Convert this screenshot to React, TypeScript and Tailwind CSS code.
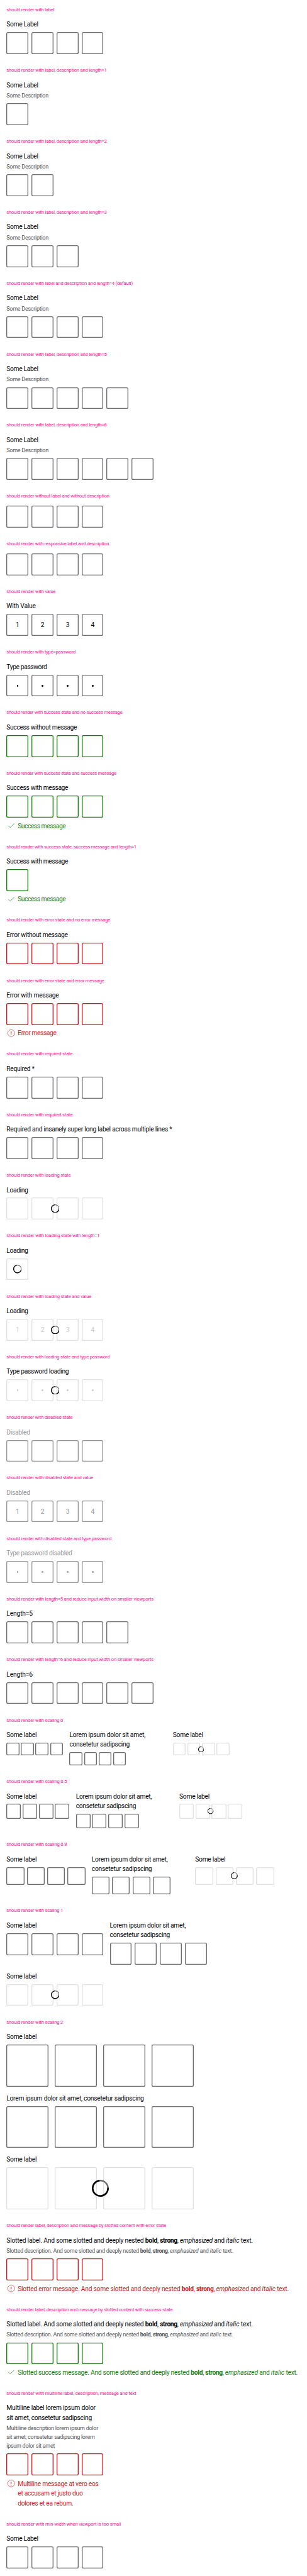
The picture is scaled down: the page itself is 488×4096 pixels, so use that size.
import React from 'react';

type State = 'none' | 'success' | 'error' | 'loading' | 'disabled';

const borderColor: Record<State, string> = {
  none: 'shadow-[inset_0_0_0_2.1px_#6b6d70]',
  success: 'shadow-[inset_0_0_0_2.1px_#197e10]',
  error: 'shadow-[inset_0_0_0_2.1px_#cc1922]',
  loading: 'shadow-[inset_0_0_0_2.1px_#e1e1e2]',
  disabled: 'shadow-[inset_0_0_0_2.1px_#949598]',
};

const valueColor: Record<State, string> = {
  none: 'text-[#010205]',
  success: 'text-[#010205]',
  error: 'text-[#010205]',
  loading: 'text-[#cbcbcc]',
  disabled: 'text-[#949598]',
};

type Scale = 's0' | 's05' | 's08' | 's1' | 's2';

const boxSize: Record<Scale, string> = {
  s0: 'size-8',
  s05: 'size-9',
  s08: 'size-11',
  s1: 'size-[54px]',
  s2: 'size-[104px]',
};

const gapSize: Record<Scale, string> = {
  s0: 'gap-1',
  s05: 'gap-1',
  s08: 'gap-[6.4px]',
  s1: 'gap-2',
  s2: 'gap-4',
};

const spinnerSize: Record<Scale, string> = {
  s0: 'size-[14.5px]',
  s05: 'size-[14.5px]',
  s08: 'size-[17px]',
  s1: 'size-[21px]',
  s2: 'size-[42px]',
};

function Spinner({ scale }: { scale: Scale }) {
  return (
    <div className="absolute inset-0 flex items-center justify-center">
      <svg viewBox="0 0 42 42" fill="none" strokeWidth="3.8" className={spinnerSize[scale]}>
        <circle cx="21" cy="21" r="19" stroke="#6b6d70" />
        <path d="M40 21A19 19 0 1 1 17.4 2.35" stroke="#010205" strokeLinecap="round" />
      </svg>
    </div>
  );
}

function Boxes({
  length = 4,
  state = 'none',
  scale = 's1',
  value,
}: {
  length?: number;
  state?: State;
  scale?: Scale;
  value?: 'digits' | 'password';
}) {
  return (
    <div className={`relative flex w-fit ${gapSize[scale]}`}>
      {Array.from({ length }, (_, i) => (
        <div
          key={i}
          className={`flex shrink-0 items-center justify-center rounded-[4px] ${boxSize[scale]} ${borderColor[state]} ${valueColor[state]}`}
        >
          {value === 'digits' && <span className="pt-px pl-px">{i + 1}</span>}
          {value === 'password' && <span className="mt-px ml-px size-[4.4px] rounded-full bg-current" />}
        </div>
      ))}
      {state === 'loading' && <Spinner scale={scale} />}
    </div>
  );
}

function Label({ children, t, dim }: { children: React.ReactNode; t?: string; dim?: boolean }) {
  return (
    <div
      className={`-mb-px pt-px whitespace-nowrap ${dim ? 'text-[#949598]' : 'text-[#010205]'} ${t ?? 'tracking-[-0.42px]'}`}
    >
      {children}
    </div>
  );
}

function Description({ children }: { children: React.ReactNode }) {
  return (
    <div className="mt-1 text-[14px] leading-[21.83px] tracking-[-0.41px] whitespace-nowrap text-[#535457]">
      {children}
    </div>
  );
}

function Message({ state, t, children }: { state: 'success' | 'error'; t?: string; children: React.ReactNode }) {
  return (
    <div className={`mt-2 flex gap-1 whitespace-nowrap ${state === 'error' ? 'text-[#cc1922]' : 'text-[#197e10]'}`}>
      <svg viewBox="0 0 24 24" fill="none" stroke="currentColor" className="size-6 shrink-0">
        {state === 'error' ? (
          <>
            <circle cx="12" cy="12" r="8.5" />
            <path d="M12 7.7V13.7M12 15.2V17.1" strokeWidth="1.8" />
          </>
        ) : (
          <path d="M5 12.3L9.4 16.7L20 7.3" strokeWidth="1.1" />
        )}
      </svg>
      <div className={`-mb-px pt-px ${t ?? 'tracking-[-0.42px]'}`}>{children}</div>
    </div>
  );
}

function Case({ title, t, children }: { title: string; t?: string; children: React.ReactNode }) {
  return (
    <section className="mb-8">
      <h2
        className={`mb-4 h-4 pt-px text-[12px] leading-4 whitespace-nowrap text-[#ff1493] ${t ?? 'tracking-[-0.34px]'}`}
      >
        {title}
      </h2>
      {children}
    </section>
  );
}

function Pin({
  label,
  t,
  desc,
  message,
  length,
  state = 'none',
  scale,
  value,
}: {
  label?: React.ReactNode;
  t?: string;
  desc?: React.ReactNode;
  message?: React.ReactNode;
  length?: number;
  state?: State;
  scale?: Scale;
  value?: 'digits' | 'password';
}) {
  return (
    <div>
      {label && (
        <Label t={t} dim={state === 'disabled'}>
          {label}
        </Label>
      )}
      {desc && <Description>{desc}</Description>}
      <div className={label ? 'mt-2' : ''}>
        <Boxes length={length} state={state} scale={scale} value={value} />
      </div>
      {message}
    </div>
  );
}

function Nested() {
  return (
    <>
      <b className="font-bold">bold</b>, <strong className="font-bold tracking-[-0.6px]">strong</strong>,{' '}
      <em className="tracking-[-0.27px] italic">emphasized</em> and{' '}
      <i className="tracking-[0.05px] italic">italic</i> text.
    </>
  );
}

function ScaledRow({ scale }: { scale: Scale }) {
  return (
    <div className="flex flex-wrap gap-4">
      <Pin label="Some label" t="tracking-[-0.44px]" scale={scale} />
      <div className={scale === 's2' ? '' : 'w-60'}>
        <Pin
          t="tracking-[-0.41px]"
          label={
            scale === 's2' ? (
              'Lorem ipsum dolor sit amet, consetetur sadipscing'
            ) : (
              <>
                Lorem ipsum dolor sit amet,
                <br />
                consetetur sadipscing
              </>
            )
          }
          scale={scale}
        />
      </div>
      <Pin label="Some label" t="tracking-[-0.44px]" scale={scale} state="loading" />
    </div>
  );
}

export default function App() {
  return (
    <main className="h-[6378px] w-[760px] overflow-hidden bg-white p-4 font-[Roboto,'Liberation_Sans',sans-serif] text-[16px] leading-6 text-[#010205] [zoom:0.6422]">
      <Case title="should render with label">
        <Pin label="Some Label" t="tracking-[-0.54px]" />
      </Case>
      <Case title="should render with label, description and length=1" t="tracking-[-0.31px]">
        <Pin label="Some Label" t="tracking-[-0.54px]" desc="Some Description" length={1} />
      </Case>
      <Case title="should render with label, description and length=2" t="tracking-[-0.31px]">
        <Pin label="Some Label" t="tracking-[-0.54px]" desc="Some Description" length={2} />
      </Case>
      <Case title="should render with label, description and length=3" t="tracking-[-0.31px]">
        <Pin label="Some Label" t="tracking-[-0.54px]" desc="Some Description" length={3} />
      </Case>
      <Case title="should render with label and description and length=4 (default)" t="tracking-[-0.32px]">
        <Pin label="Some Label" t="tracking-[-0.54px]" desc="Some Description" />
      </Case>
      <Case title="should render with label, description and length=5" t="tracking-[-0.31px]">
        <Pin label="Some Label" t="tracking-[-0.54px]" desc="Some Description" length={5} />
      </Case>
      <Case title="should render with label, description and length=6" t="tracking-[-0.31px]">
        <Pin label="Some Label" t="tracking-[-0.54px]" desc="Some Description" length={6} />
      </Case>
      <Case title="should render without label and without description">
        <Pin />
      </Case>
      <Case title="should render with responsive label and description" t="tracking-[-0.37px]">
        <Pin />
      </Case>
      <Case title="should render with value" t="tracking-[-0.32px]">
        <Pin label="With Value" t="tracking-[-0.33px]" value="digits" />
      </Case>
      <Case title="should render with type=password" t="tracking-[-0.36px]">
        <Pin label="Type password" t="tracking-[-0.58px]" value="password" />
      </Case>
      <Case title="should render with success state and no success message" t="tracking-[-0.48px]">
        <Pin label="Success without message" t="tracking-[-0.52px]" state="success" />
      </Case>
      <Case title="should render with success state and success message" t="tracking-[-0.48px]">
        <Pin
          label="Success with message"
          t="tracking-[-0.53px]"
          state="success"
          message={
            <Message state="success" t="tracking-[-0.72px]">
              Success message
            </Message>
          }
        />
      </Case>
      <Case title="should render with success state, success message and length=1" t="tracking-[-0.43px]">
        <Pin
          label="Success with message"
          t="tracking-[-0.53px]"
          state="success"
          length={1}
          message={
            <Message state="success" t="tracking-[-0.72px]">
              Success message
            </Message>
          }
        />
      </Case>
      <Case title="should render with error state and no error message" t="tracking-[-0.37px]">
        <Pin label="Error without message" state="error" />
      </Case>
      <Case title="should render with error state and error message" t="tracking-[-0.36px]">
        <Pin
          label="Error with message"
          t="tracking-[-0.44px]"
          state="error"
          message={
            <Message state="error" t="tracking-[-0.62px]">
              Error message
            </Message>
          }
        />
      </Case>
      <Case title="should render with required state">
        <Pin label="Required *" t="tracking-[-0.46px]" />
      </Case>
      <Case title="should render with required state">
        <Pin label="Required and insanely super long label across multiple lines *" t="tracking-[-0.38px]" />
      </Case>
      <Case title="should render with loading state" t="tracking-[-0.36px]">
        <Pin label="Loading" t="tracking-[-0.55px]" state="loading" />
      </Case>
      <Case title="should render with loading state with length=1" t="tracking-[-0.31px]">
        <Pin label="Loading" t="tracking-[-0.55px]" state="loading" length={1} />
      </Case>
      <Case title="should render with loading state and value">
        <Pin label="Loading" t="tracking-[-0.55px]" state="loading" value="digits" />
      </Case>
      <Case title="should render with loading state and type password" t="tracking-[-0.37px]">
        <Pin label="Type password loading" t="tracking-[-0.46px]" state="loading" value="password" />
      </Case>
      <Case title="should render with disabled state" t="tracking-[-0.38px]">
        <Pin label="Disabled" state="disabled" />
      </Case>
      <Case title="should render with disabled state and value" t="tracking-[-0.36px]">
        <Pin label="Disabled" state="disabled" value="digits" />
      </Case>
      <Case title="should render with disabled state and type password" t="tracking-[-0.39px]">
        <Pin label="Type password disabled" state="disabled" value="password" />
      </Case>
      <Case
        title="should render with length=5 and reduce input width on smaller viewports"
        t="tracking-[-0.30px]"
      >
        <Pin label="Length=5" t="tracking-[-0.21px]" length={5} />
      </Case>
      <Case
        title="should render with length=6 and reduce input width on smaller viewports"
        t="tracking-[-0.30px]"
      >
        <Pin label="Length=6" t="tracking-[-0.21px]" length={6} />
      </Case>
      <Case title="should render with scaling 0" t="tracking-[-0.32px]">
        <ScaledRow scale="s0" />
      </Case>
      <Case title="should render with scaling 0.5" t="tracking-[-0.31px]">
        <ScaledRow scale="s05" />
      </Case>
      <Case title="should render with scaling 0.8" t="tracking-[-0.31px]">
        <ScaledRow scale="s08" />
      </Case>
      <Case title="should render with scaling 1" t="tracking-[-0.32px]">
        <ScaledRow scale="s1" />
      </Case>
      <Case title="should render with scaling 2" t="tracking-[-0.32px]">
        <ScaledRow scale="s2" />
      </Case>
      <Case title="should render label, description and message by slotted content with error state">
        <Pin
          t="tracking-[-0.31px]"
          label={
            <>
              Slotted label. And some slotted and deeply nested <Nested />
            </>
          }
          desc={
            <>
              Slotted description. And some slotted and deeply nested <Nested />
            </>
          }
          state="error"
          message={
            <Message state="error" t="tracking-[-0.38px]">
              Slotted error message. And some slotted and deeply nested <Nested />
            </Message>
          }
        />
      </Case>
      <Case
        title="should render label, description and message by slotted content with success state"
        t="tracking-[-0.37px]"
      >
        <Pin
          t="tracking-[-0.31px]"
          label={
            <>
              Slotted label. And some slotted and deeply nested <Nested />
            </>
          }
          desc={
            <>
              Slotted description. And some slotted and deeply nested <Nested />
            </>
          }
          state="success"
          message={
            <Message state="success" t="tracking-[-0.41px]">
              Slotted success message. And some slotted and deeply nested <Nested />
            </Message>
          }
        />
      </Case>
      <Case title="should render with multiline label, description, message and text" t="tracking-[-0.29px]">
        <Pin
          t="tracking-[-0.35px]"
          label={
            <>
              Multiline label lorem ipsum dolor
              <br />
              sit amet, consetetur sadipscing
            </>
          }
          desc={
            <>
              Multiline description lorem ipsum dolor
              <br />
              sit amet, consetetur sadipscing lorem
              <br />
              ipsum dolor sit amet
            </>
          }
          state="error"
          message={
            <Message state="error">
              Multiline message at vero eos
              <br />
              et accusam et justo duo
              <br />
              dolores et ea rebum.
            </Message>
          }
        />
      </Case>
      <Case title="should render with min-width when viewport is too small" t="tracking-[-0.27px]">
        <Pin label="Some Label" t="tracking-[-0.54px]" />
      </Case>
    </main>
  );
}
